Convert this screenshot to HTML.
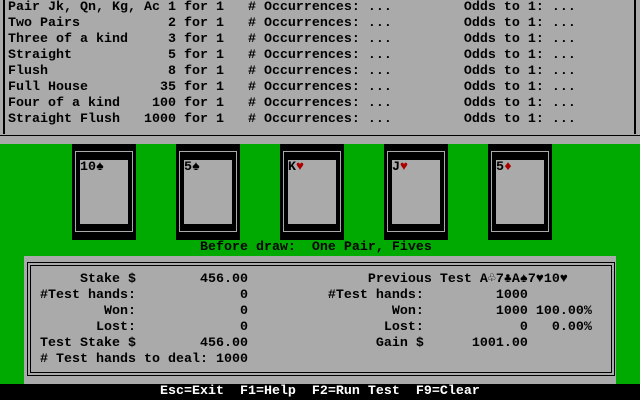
<!DOCTYPE html>
<html><head><meta charset="utf-8"><style>
*{margin:0;padding:0}
body{width:640px;height:400px;background:#00aa00;position:relative;overflow:hidden;font-family:"Liberation Mono","DejaVu Sans Mono",monospace;font-size:13.33px;font-weight:bold;line-height:16px}
.a{position:absolute}
pre{position:absolute;left:0;font:inherit;white-space:pre;color:#000;letter-spacing:0}
.r{color:#aa0000}
.w{color:#fff}
</style></head><body>
<div class="a" style="left:0;top:0;width:640px;height:144px;background:#aaa"></div>
<div class="a" style="left:3px;top:0;width:2px;height:134px;background:#000"></div>
<div class="a" style="left:634px;top:0;width:2px;height:134px;background:#000"></div>
<div class="a" style="left:0;top:135px;width:640px;height:1px;background:#000"></div>
<pre style="top:0"> Pair Jk, Qn, Kg, Ac 1 for 1   # Occurrences: ...         Odds to 1: ...
 Two Pairs           2 for 1   # Occurrences: ...         Odds to 1: ...
 Three of a kind     3 for 1   # Occurrences: ...         Odds to 1: ...
 Straight            5 for 1   # Occurrences: ...         Odds to 1: ...
 Flush               8 for 1   # Occurrences: ...         Odds to 1: ...
 Full House         35 for 1   # Occurrences: ...         Odds to 1: ...
 Four of a kind    100 for 1   # Occurrences: ...         Odds to 1: ...
 Straight Flush   1000 for 1   # Occurrences: ...         Odds to 1: ...</pre>

<!-- cards -->
<div class="a" style="left:72px;top:144px;width:64px;height:96px;background:#000"></div>
<div class="a" style="left:75px;top:151px;width:56px;height:79px;border:1px solid #aaa"></div>
<div class="a" style="left:80px;top:160px;width:48px;height:64px;background:#aaa"></div>
<div class="a" style="left:176px;top:144px;width:64px;height:96px;background:#000"></div>
<div class="a" style="left:179px;top:151px;width:56px;height:79px;border:1px solid #aaa"></div>
<div class="a" style="left:184px;top:160px;width:48px;height:64px;background:#aaa"></div>
<div class="a" style="left:280px;top:144px;width:64px;height:96px;background:#000"></div>
<div class="a" style="left:283px;top:151px;width:56px;height:79px;border:1px solid #aaa"></div>
<div class="a" style="left:288px;top:160px;width:48px;height:64px;background:#aaa"></div>
<div class="a" style="left:384px;top:144px;width:64px;height:96px;background:#000"></div>
<div class="a" style="left:387px;top:151px;width:56px;height:79px;border:1px solid #aaa"></div>
<div class="a" style="left:392px;top:160px;width:48px;height:64px;background:#aaa"></div>
<div class="a" style="left:488px;top:144px;width:64px;height:96px;background:#000"></div>
<div class="a" style="left:491px;top:151px;width:56px;height:79px;border:1px solid #aaa"></div>
<div class="a" style="left:496px;top:160px;width:48px;height:64px;background:#aaa"></div>
<pre style="top:160px;left:80px">10♠</pre>
<pre style="top:160px;left:184px">5♠</pre>
<pre style="top:160px;left:288px">K<span class="r">♥</span></pre>
<pre style="top:160px;left:392px">J<span class="r">♥</span></pre>
<pre style="top:160px;left:496px">5<span class="r">♦</span></pre>

<pre style="top:240px">                         Before draw:  One Pair, Fives</pre>

<div class="a" style="left:24px;top:256px;width:592px;height:128px;background:#aaa"></div>
<div class="a" style="left:27px;top:262px;width:586px;height:112px;border:1px solid #000"></div>
<div class="a" style="left:30px;top:265px;width:580px;height:106px;border:1px solid #000"></div>
<pre style="top:272px">          Stake $        456.00               Previous Test A♧7♣A♠7♥10♥
     #Test hands:             0          #Test hands:         1000
             Won:             0                  Won:         1000 100.00%
            Lost:             0                 Lost:            0   0.00%
     Test Stake $        456.00                Gain $      1001.00
     # Test hands to deal: 1000</pre>

<div class="a" style="left:0;top:384px;width:640px;height:16px;background:#000"></div>
<pre class="w" style="top:384px;color:#fff">                    Esc=Exit  F1=Help  F2=Run Test  F9=Clear</pre>
</body></html>
